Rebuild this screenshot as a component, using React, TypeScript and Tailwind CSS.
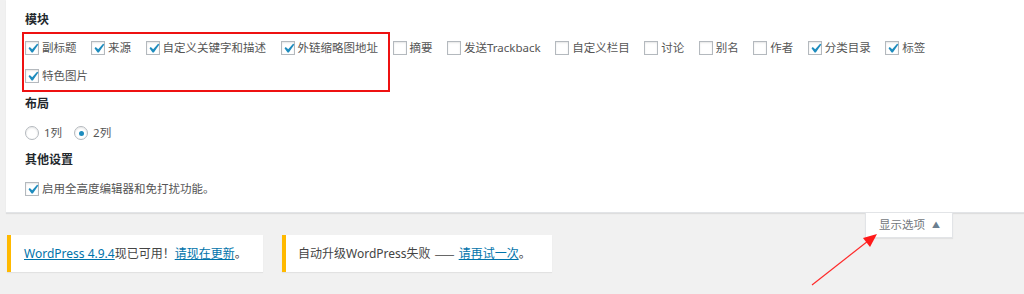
import React from "react";

const font = { fontFamily: "'Noto Sans', 'Noto Sans CJK SC', sans-serif" };
const cjk = { fontFamily: "'Noto Sans CJK SC', sans-serif" };

function Check({ checked }: { checked: boolean }) {
  return (
    <span className="relative inline-block w-[14px] h-[14px] shrink-0 border border-[#b4b9be] bg-white shadow-[inset_0_1px_2px_rgba(0,0,0,0.1)]">
      {checked && (
        <svg viewBox="0 0 20 20" className="absolute left-[-3px] top-[-3px] w-[19px] h-[19px]">
          <path d="M14.83 4.89l1.34.94-5.81 8.38H9.02L5.78 9.67l1.34-1.25 2.57 2.4z" fill="#1e8cbe" />
        </svg>
      )}
    </span>
  );
}

function Item({ label, checked }: { label: string; checked: boolean }) {
  return (
    <span className="flex items-center mr-[14.5px]">
      <Check checked={checked} />
      <span className="ml-[3px] text-[11.5px] text-[#555]">{label}</span>
    </span>
  );
}

function Radio({ label, checked }: { label: string; checked: boolean }) {
  return (
    <span className="flex items-center mr-[12px]">
      <span className="relative flex items-center justify-center w-[14px] h-[14px] rounded-full border border-[#b4b9be] bg-white shadow-[inset_0_1px_2px_rgba(0,0,0,0.1)]">
        {checked && <span className="w-[5px] h-[5px] rounded-full bg-[#1e8cbe]" />}
      </span>
      <span className="ml-[5px] text-[11.5px] text-[#555]">{label}</span>
    </span>
  );
}

const row1: [string, boolean][] = [
  ["副标题", true],
  ["来源", true],
  ["自定义关键字和描述", true],
  ["外链缩略图地址", true],
  ["摘要", false],
  ["发送Trackback", false],
  ["自定义栏目", false],
  ["讨论", false],
  ["别名", false],
  ["作者", false],
  ["分类目录", true],
  ["标签", true],
];

export default function App() {
  return (
    <div className="relative w-[1024px] h-[294px] overflow-hidden bg-[#f1f1f1]" style={font}>
      <div className="ml-[6px] bg-white shadow-[0_1px_1px_rgba(0,0,0,0.08)] border-b border-[#e2e4e7] pl-[19px] pt-[11px] pb-[9px]">
        <div className="h-[18px] flex items-center text-[12px] font-bold text-[#23282d]">模块</div>
        <div className="mt-[5px] h-[28px] flex items-center">
          {row1.map(([l, c]) => (
            <Item key={l} label={l} checked={c} />
          ))}
        </div>
        <div className="h-[28px] flex items-center">
          <Item label="特色图片" checked={true} />
        </div>
        <div className="mt-[5px] h-[18px] flex items-center text-[12px] font-bold text-[#23282d]">布局</div>
        <div className="mt-[6px] h-[28px] flex items-center">
          <Radio label="1列" checked={false} />
          <Radio label="2列" checked={true} />
        </div>
        <div className="mt-[4px] h-[18px] flex items-center text-[12px] font-bold text-[#23282d]">其他设置</div>
        <div className="mt-[6px] h-[28px] flex items-center">
          <Item label="启用全高度编辑器和免打扰功能。" checked={true} />
        </div>
      </div>

      <div className="flex justify-end pr-[71px]">
        <div className="w-[88px] h-[25px] bg-white border-x border-b border-[#e2e4e7] shadow-[0_1px_1px_rgba(0,0,0,0.06)] flex items-center pl-[13px] text-[11.5px] text-[#72777c]">
          <span>显示选项</span>
          <span className="ml-[7px] text-[8px] text-[#6b7f90]">▲</span>
        </div>
      </div>

      <div className="mt-[-3px] pl-[7px] flex gap-[19px]">
        <div className="w-[256px] h-[37px] bg-white border-l-4 border-[#ffb900] shadow-[0_1px_1px_rgba(0,0,0,0.06)] flex items-center pl-[13px] text-[12px] text-[#444]">
          <span className="text-[#0073aa] underline">WordPress 4.9.4</span>
          <span>现已可用！</span>
          <span className="text-[#0073aa] underline">请现在更新</span>
          <span>。</span>
        </div>
        <div className="w-[270px] h-[37px] bg-white border-l-4 border-[#ffb900] shadow-[0_1px_1px_rgba(0,0,0,0.06)] flex items-center pl-[12px] text-[12px] text-[#444]">
          <span>自动升级WordPress失败</span>
          <span className="mx-[4px]" style={cjk}>——</span>
          <span className="text-[#0073aa] underline">请再试一次</span>
          <span>。</span>
        </div>
      </div>

      <div className="absolute left-[22px] top-[32px] w-[368px] h-[60px] border-2 border-[#ee1111] pointer-events-none" />

      <svg className="absolute left-0 top-0 pointer-events-none" width="1024" height="294">
        <line x1="812" y1="285" x2="868" y2="241" stroke="#ff2a2a" strokeWidth="1.2" />
        <polygon points="877,234 863,238 870,247" fill="#ff1a1a" />
      </svg>
    </div>
  );
}
